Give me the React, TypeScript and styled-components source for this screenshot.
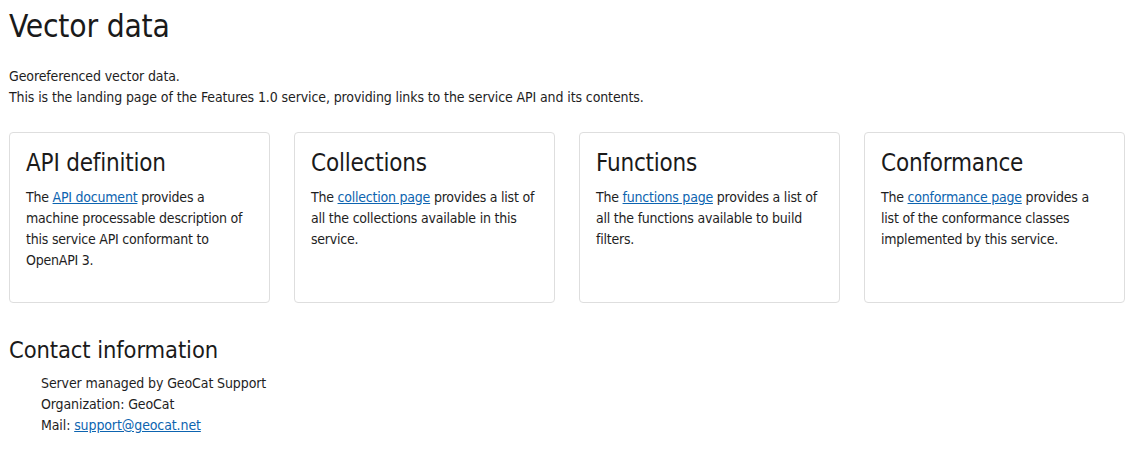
import React from "react";
import styled, { createGlobalStyle } from "styled-components";

const GlobalStyle = createGlobalStyle`
  html, body {
    margin: 0;
    padding: 0;
    background: #ffffff;
  }
  body {
    font-family: "DejaVu Sans Condensed", "DejaVu Sans", sans-serif;
    font-size: 14px;
    letter-spacing: -0.11px;
    line-height: 21px;
    color: #1e1e1e;
  }
`;

const Page = styled.main`
  padding: 7px 12px 20px 9px;
`;

const Title = styled.h1`
  margin: 0 0 21px;
  font-size: 31.5px;
  font-weight: 400;
  line-height: 38px;
  letter-spacing: -0.2px;
  color: #1a1a1a;
`;

const Intro = styled.p`
  margin: 0 0 24px;
`;

const CardGrid = styled.section`
  display: grid;
  grid-template-columns: repeat(4, 1fr);
  gap: 24px;
  margin-bottom: 34px;
`;

const Card = styled.article`
  border: 1px solid #dedede;
  border-radius: 4px;
  padding: 16px 16px 0;
`;

const CardTitle = styled.h3`
  margin: 0 0 8px;
  font-size: 24px;
  font-weight: 400;
  line-height: 29px;
  letter-spacing: -0.2px;
  color: #1a1a1a;
`;

const CardText = styled.p`
  margin: 0 0 31px;
  padding-top: 1px;
  letter-spacing: -0.22px;
`;

const Link = styled.a`
  color: #0d64b0;
  text-decoration: underline;
`;

const SectionTitle = styled.h2`
  margin: 0 0 10px;
  font-size: 23.5px;
  font-weight: 400;
  line-height: 26px;
  letter-spacing: -0.1px;
  color: #1a1a1a;
`;

const ContactList = styled.ul`
  list-style: none;
  margin: 0;
  padding: 0 0 0 32px;
`;

const ContactItem = styled.li`
  margin: 0;
`;

type CardData = {
  title: string;
  before: string;
  link: string;
  after: string;
};

const cards: CardData[] = [
  {
    title: "API definition",
    before: "The ",
    link: "API document",
    after:
      " provides a machine processable description of this service API conformant to OpenAPI 3.",
  },
  {
    title: "Collections",
    before: "The ",
    link: "collection page",
    after: " provides a list of all the collections available in this service.",
  },
  {
    title: "Functions",
    before: "The ",
    link: "functions page",
    after: " provides a list of all the functions available to build filters.",
  },
  {
    title: "Conformance",
    before: "The ",
    link: "conformance page",
    after: " provides a list of the conformance classes implemented by this service.",
  },
];

export default function App() {
  return (
    <>
      <GlobalStyle />
      <Page>
        <Title>Vector data</Title>
        <Intro>
          Georeferenced vector data.
          <br />
          This is the landing page of the Features 1.0 service, providing links to the
          service API and its contents.
        </Intro>
        <CardGrid>
          {cards.map((c) => (
            <Card key={c.title}>
              <CardTitle>{c.title}</CardTitle>
              <CardText>
                {c.before}
                <Link href="#">{c.link}</Link>
                {c.after}
              </CardText>
            </Card>
          ))}
        </CardGrid>
        <SectionTitle>Contact information</SectionTitle>
        <ContactList>
          <ContactItem>Server managed by GeoCat Support</ContactItem>
          <ContactItem>Organization: GeoCat</ContactItem>
          <ContactItem>
            Mail: <Link href="#">support@geocat.net</Link>
          </ContactItem>
        </ContactList>
      </Page>
    </>
  );
}
